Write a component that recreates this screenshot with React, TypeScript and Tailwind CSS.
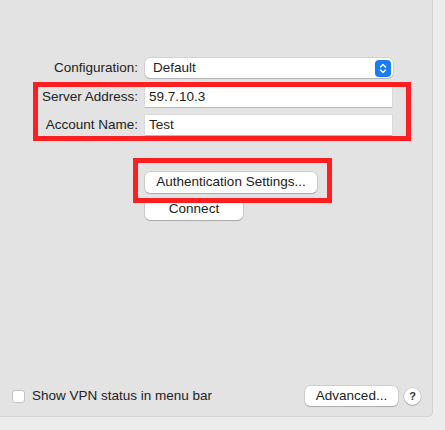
import React from "react";

const font = { fontFamily: '"Liberation Sans", Arial, sans-serif' };

function Stepper() {
  return (
    <div className="w-[16px] h-[17px] rounded-[4px] bg-[#1a7cf6] flex items-center justify-center">
      <svg width="8" height="11" viewBox="0 0 8 11" fill="none">
        <path d="M1.5 4 L4 1.5 L6.5 4" stroke="white" strokeWidth="1.4" strokeLinecap="round" strokeLinejoin="round" />
        <path d="M1.5 7 L4 9.5 L6.5 7" stroke="white" strokeWidth="1.4" strokeLinecap="round" strokeLinejoin="round" />
      </svg>
    </div>
  );
}

const btn =
  "bg-white rounded-[5px] shadow-[0_0_0_0.5px_rgba(0,0,0,0.18),0_1px_1px_rgba(0,0,0,0.18)] text-[13.5px] text-[#222222] flex items-center justify-center";

const field =
  "w-[247px] h-[20px] bg-white shadow-[0_0_0_0.5px_rgba(0,0,0,0.08),0_1px_0_rgba(0,0,0,0.15)] text-[13.5px] text-[#222222] pl-[4px] flex items-center";

const label = "text-right text-[13.5px] text-[#222222] h-[20px] leading-[20px] whitespace-nowrap";

export default function App() {
  return (
    <div className="w-[445px] h-[430px] bg-[#ececec] relative overflow-hidden" style={font}>
      <div className="w-[433px] h-[417px] bg-[#e3e3e3] border-r border-b border-[#d4d4d4] rounded-br-[5px] flex flex-col">
        <div className="pt-[58px] pl-[38px] grid grid-cols-[100px_auto] gap-x-[7px] items-center">
          <div className={label}>Configuration:</div>
          <div className="w-[248px] h-[20px] bg-white rounded-[5px] shadow-[0_0_0_0.5px_rgba(0,0,0,0.15),0_1px_1px_rgba(0,0,0,0.15)] flex items-center justify-between pl-[8px] pr-[2px]">
            <span className="text-[13.5px] text-[#222222]">Default</span>
            <Stepper />
          </div>

          <div className={"mt-[9px] " + label}>Server Address:</div>
          <div className={"mt-[9px] " + field}>59.7.10.3</div>

          <div className={"mt-[8px] " + label}>Account Name:</div>
          <div className={"mt-[8px] " + field}>Test</div>
        </div>

        <div className="pl-[145px] pt-[37px] flex flex-col gap-[6px]">
          <div className={btn + " w-[172px] h-[21px]"}>Authentication Settings...</div>
          <div className={btn + " w-[98px] h-[21px]"}>Connect</div>
        </div>

        <div className="flex-1" />

        <div className="flex items-center pl-[12px] pb-[10px] h-[30px]">
          <div className="w-[13px] h-[13px] bg-white rounded-[3px] border border-[#c4c4c4]" />
          <span className="ml-[7px] text-[13.5px] text-[#222222]">Show VPN status in menu bar</span>
          <div className="flex-1" />
          <div className={btn + " w-[93px] h-[20px]"}>Advanced...</div>
          <div className="ml-[6px] mr-[11px] w-[17px] h-[17px] rounded-full bg-white shadow-[0_0_0_0.5px_rgba(0,0,0,0.2),0_1px_1px_rgba(0,0,0,0.2)] flex items-center justify-center text-[11px] font-bold text-[#333]">
            ?
          </div>
        </div>
      </div>

      <div className="absolute left-[33px] top-[82px] w-[378px] h-[59px] border-[5px] border-[#fe2020] pointer-events-none" />
      <div className="absolute left-[133px] top-[158px] w-[199px] h-[45px] border-[5px] border-[#fe2020] pointer-events-none" />
    </div>
  );
}
